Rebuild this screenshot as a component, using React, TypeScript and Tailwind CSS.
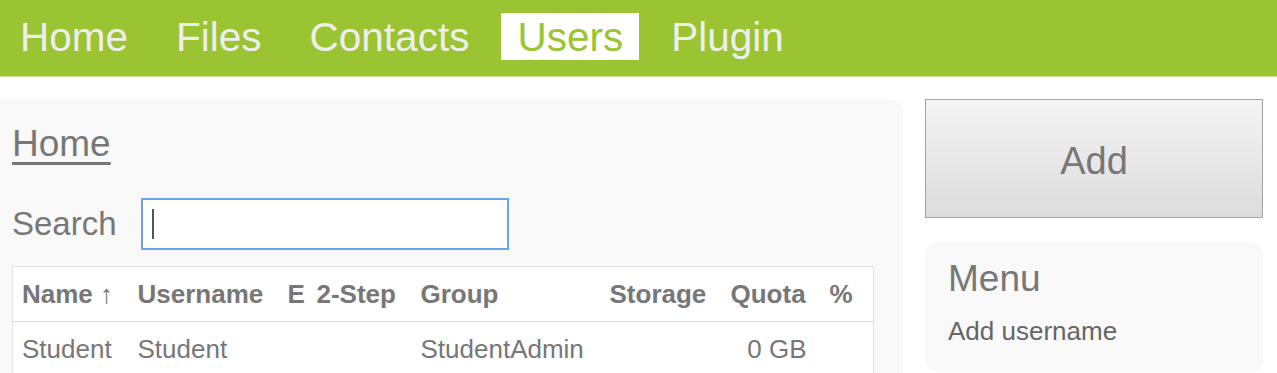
import React from 'react';

const navItems = ['Home', 'Files', 'Contacts', 'Users', 'Plugin'];

const columns = [
  { label: 'Name ↑', w: 'w-[116px]' },
  { label: 'Username', w: 'w-[150px]' },
  { label: 'E', w: 'w-[29px]' },
  { label: '2-Step', w: 'w-[104px]' },
  { label: 'Group', w: 'w-[189px]' },
  { label: 'Storage', w: 'w-[121px]' },
  { label: 'Quota', w: 'w-[95px]' },
  { label: '%', w: 'w-[57px]' },
];

const users = [
  { name: 'Student', username: 'Student', email: '', twoStep: '', group: 'StudentAdmin', storage: '', quota: '0 GB', pct: '' },
];

const App: React.FC = () => {
  return (
    <div className="min-h-screen bg-white font-['Liberation_Sans',Arial,sans-serif] text-[#777777]">
      {/* top nav */}
      <nav className="h-[77px] bg-[#9bc432] border-b border-[#cde39a] pt-[13px] pl-[4px] flex gap-4">
        {navItems.map(item => (
          <a
            key={item}
            href="#"
            className={`h-[47px] px-4 pt-[2px] text-[40.5px] leading-[45px] ${item === 'Users' ? 'bg-white text-[#9bc432]' : 'text-[#eeeeee]'}`}
          >
            {item}
          </a>
        ))}
      </nav>

      <div className="flex gap-[22px] pt-[22px] pr-[14px]">
        {/* main panel */}
        <main className="w-[903px] h-[300px] bg-[#f9f9f9] rounded-tr-[12px] px-3 pt-6">
          <a href="#" className="text-[37px] leading-[42px] underline decoration-[3px] underline-offset-[6px] text-[#777777]">Home</a>

          <div className="flex items-center gap-6 mt-[33px]">
            <label className="text-[33px] leading-[38px]">Search</label>
            <div className="relative">
              <input className="w-[368px] h-[52px] bg-white border-2 border-[#6aa2f2] outline-none px-2 text-[26px]" />
              <span className="absolute left-[11px] top-[11px] w-[2px] h-[30px] bg-[#555555]" />
            </div>
          </div>

          <table className="mt-4 table-fixed w-[861px] bg-white border border-[#e3e3e3] border-collapse text-[26px]">
            <thead>
              <tr className="h-[55px] border-b border-[#dddddd]">
                {columns.map(c => (
                  <th key={c.label} className={`${c.w} ${c.label === '%' ? 'pl-[13px]' : 'pl-[9px]'} text-left font-bold whitespace-nowrap overflow-hidden`}>
                    {c.label}
                  </th>
                ))}
              </tr>
            </thead>
            <tbody>
              {users.map(u => (
                <tr key={u.username} className="h-[56px]">
                  <td className="pl-[9px]">{u.name}</td>
                  <td className="pl-[9px]">{u.username}</td>
                  <td className="pl-[9px]">{u.email}</td>
                  <td className="pl-[9px]">{u.twoStep}</td>
                  <td className="pl-[9px] whitespace-nowrap">{u.group}</td>
                  <td className="pl-[9px]">{u.storage}</td>
                  <td className="pr-[10px] text-right whitespace-nowrap">{u.quota}</td>
                  <td className="pl-[9px]">{u.pct}</td>
                </tr>
              ))}
            </tbody>
          </table>
        </main>

        {/* sidebar */}
        <aside className="w-[338px] flex flex-col gap-6">
          <button className="h-[119px] w-full pt-[5px] border border-[#a3a3a3] bg-gradient-to-b from-[#f4f4f4] to-[#dcdcdc] text-[38px] text-[#777777]">
            Add
          </button>
          <div className="h-[130px] bg-[#f9f9f9] rounded-[12px] pl-[23px] pt-4">
            <h2 className="text-[37px] leading-[42px]">Menu</h2>
            <a href="#" className="block mt-4 text-[26px] leading-[30px] text-[#666666]">Add username</a>
          </div>
        </aside>
      </div>
    </div>
  );
};

export default App;
